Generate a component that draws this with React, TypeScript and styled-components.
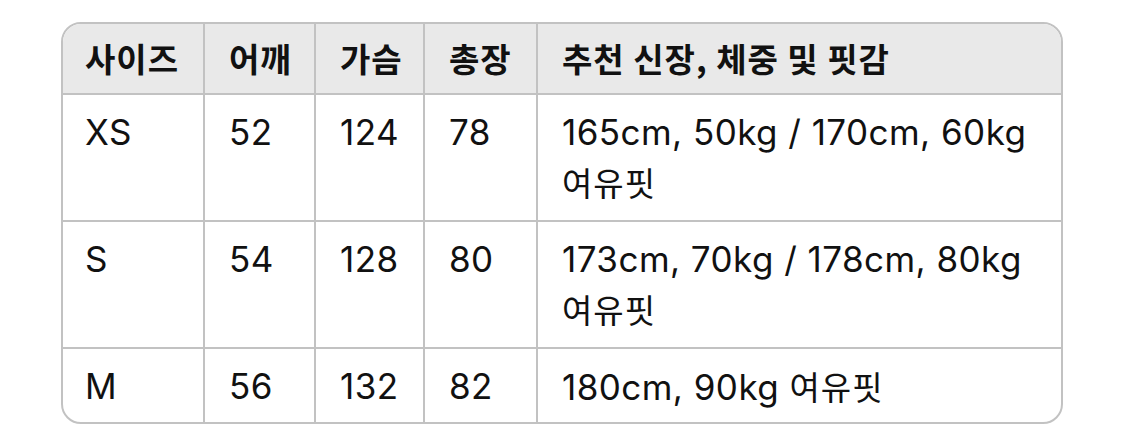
import React from "react";
import styled, { createGlobalStyle } from "styled-components";

const GlobalStyle = createGlobalStyle`
  html, body {
    margin: 0;
    padding: 0;
    background: #ffffff;
  }
  body {
    font-family: Inter, "Noto Sans CJK KR", sans-serif;
    color: #111111;
  }
`;

const Page = styled.div`
  padding: 22px 0 0 61px;
`;

const Frame = styled.div`
  width: 1002px;
  box-sizing: border-box;
  border: 2px solid #c2c2c2;
  border-radius: 20px;
  overflow: hidden;
`;

const Table = styled.table`
  width: 100%;
  table-layout: fixed;
  border-collapse: separate;
  border-spacing: 0;
`;

const HeadCell = styled.th`
  box-sizing: border-box;
  background: #e9e9e9;
  text-align: left;
  vertical-align: top;
  padding: 9px 0 10px 24px;
  font-family: "Noto Sans CJK KR", sans-serif;
  font-weight: 700;
  font-size: 33px;
  letter-spacing: 1px;
  line-height: 50px;
  color: #111111;
  white-space: nowrap;
  border-bottom: 2px solid #c2c2c2;
  &:not(:first-child) {
    border-left: 2px solid #c2c2c2;
  }
  &:first-child {
    padding-left: 22px;
  }
`;

const Row = styled.tr`
  &:not(:last-child) > td {
    border-bottom: 2px solid #c2c2c2;
  }
  &:last-child > td {
    padding-bottom: 10px;
  }
`;

const Cell = styled.td`
  box-sizing: border-box;
  text-align: left;
  vertical-align: top;
  padding: 12px 10px 12px 24px;
  font-family: Inter, "Noto Sans CJK KR", sans-serif;
  font-weight: 400;
  font-size: 35px;
  letter-spacing: 0.45px;
  line-height: 50px;
  color: #111111;
  &:not(:first-child) {
    border-left: 2px solid #c2c2c2;
  }
  &:first-child {
    padding-left: 22px;
  }
`;

const Korean = styled.span`
  font-family: "Noto Sans CJK KR", sans-serif;
  font-size: 33px;
  letter-spacing: 1px;
`;

const widths = [140, 111, 109, 113, 525];
const headers = ["사이즈", "어깨", "가슴", "총장", "추천 신장, 체중 및 핏감"];

type Item = {
  size: string;
  shoulder: string;
  chest: string;
  length: string;
  rec: string;
  fit: string;
  breakFit: boolean;
};

const rows: Item[] = [
  { size: "XS", shoulder: "52", chest: "124", length: "78", rec: "165cm, 50kg / 170cm, 60kg", fit: "여유핏", breakFit: true },
  { size: "S", shoulder: "54", chest: "128", length: "80", rec: "173cm, 70kg / 178cm, 80kg", fit: "여유핏", breakFit: true },
  { size: "M", shoulder: "56", chest: "132", length: "82", rec: "180cm, 90kg", fit: "여유핏", breakFit: false },
];

export default function App() {
  return (
    <>
      <GlobalStyle />
      <Page>
        <Frame>
          <Table>
            <colgroup>
              {widths.map((w, i) => (
                <col key={i} style={{ width: w }} />
              ))}
            </colgroup>
            <thead>
              <tr>
                {headers.map((h) => (
                  <HeadCell key={h}>{h}</HeadCell>
                ))}
              </tr>
            </thead>
            <tbody>
              {rows.map((r) => (
                <Row key={r.size}>
                  <Cell>{r.size}</Cell>
                  <Cell>{r.shoulder}</Cell>
                  <Cell>{r.chest}</Cell>
                  <Cell>{r.length}</Cell>
                  <Cell>
                    {r.rec}
                    {r.breakFit ? <br /> : " "}
                    <Korean>{r.fit}</Korean>
                  </Cell>
                </Row>
              ))}
            </tbody>
          </Table>
        </Frame>
      </Page>
    </>
  );
}
